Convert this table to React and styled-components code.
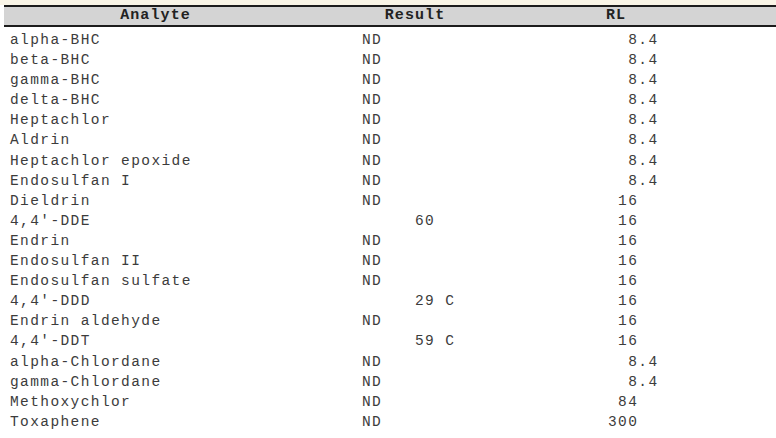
import React from "react";
import styled, { createGlobalStyle } from "styled-components";

const GlobalStyle = createGlobalStyle`
  body {
    margin: 0;
    background: #fff;
  }
`;

const rows = [
  ["alpha-BHC", null, "8.4"],
  ["beta-BHC", null, "8.4"],
  ["gamma-BHC", null, "8.4"],
  ["delta-BHC", null, "8.4"],
  ["Heptachlor", null, "8.4"],
  ["Aldrin", null, "8.4"],
  ["Heptachlor epoxide", null, "8.4"],
  ["Endosulfan I", null, "8.4"],
  ["Dieldrin", null, "16"],
  ["4,4'-DDE", "60", "16"],
  ["Endrin", null, "16"],
  ["Endosulfan II", null, "16"],
  ["Endosulfan sulfate", null, "16"],
  ["4,4'-DDD", "29 C", "16"],
  ["Endrin aldehyde", null, "16"],
  ["4,4'-DDT", "59 C", "16"],
  ["alpha-Chlordane", null, "8.4"],
  ["gamma-Chlordane", null, "8.4"],
  ["Methoxychlor", null, "84"],
  ["Toxaphene", null, "300"],
];

// line the RL values up on the decimal point
const alignRL = (v) => {
  const [int, dec] = v.split(".");
  return int.padStart(3, " ") + (dec ? "." + dec : "");
};

const Page = styled.div`
  padding: 5px 0 0 4px;
  background: linear-gradient(#f9f5e7 0 5px, #fff 5px);
  font-family: "Courier New", "Nimbus Mono PS", "FreeMono", "Liberation Mono", monospace;
  color: #3c3c3c;
`;

const Grid = styled.div`
  display: grid;
  grid-template-columns: 303px 216px 186px 1fr;
`;

const Body = styled(Grid)`
  padding-top: 3px;
`;

const HeadCell = styled.div`
  height: 18px;
  line-height: 18px;
  background: #d4d4d4;
  border-top: 2px solid #1c1c1c;
  border-bottom: 2px solid #1c1c1c;
  font-size: 15px;
  letter-spacing: 1.1px;
  font-weight: bold;
  text-align: center;
  color: #222;
`;

const Cell = styled.div`
  height: 20.1px;
  line-height: 20px;
  font-size: 14.5px;
  letter-spacing: 1.4px;
  white-space: pre;
  padding-left: ${(p) => p.$pad || 0}px;
`;

const Value = styled.span`
  padding-left: 53px;
`;

const App = () => {
  return (
    <Page>
      <GlobalStyle />
      <Grid>
        <HeadCell>Analyte</HeadCell>
        <HeadCell>Result</HeadCell>
        <HeadCell>RL</HeadCell>
        <HeadCell />
      </Grid>
      <Body>
        {rows.map(([name, result, rl]) => (
          <React.Fragment key={name}>
            <Cell $pad={6}>{name}</Cell>
            <Cell $pad={55}>
              {result ? <Value>{result}</Value> : "ND"}
            </Cell>
            <Cell $pad={85}>{alignRL(rl)}</Cell>
            <Cell />
          </React.Fragment>
        ))}
      </Body>
    </Page>
  );
};

export default App;
